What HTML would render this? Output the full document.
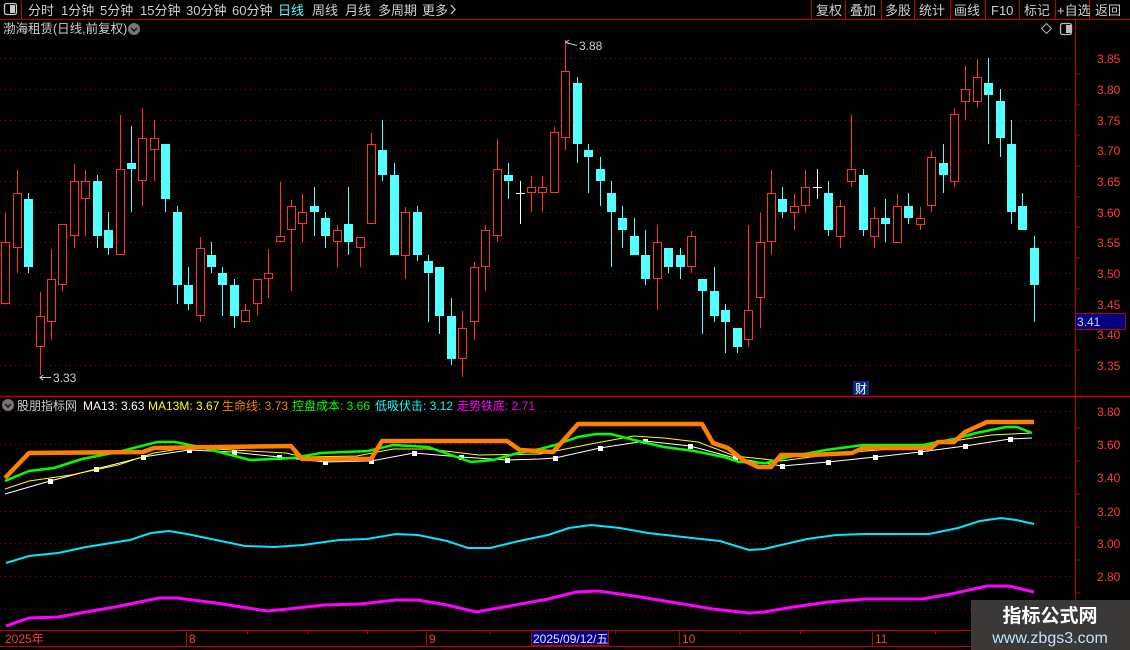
<!DOCTYPE html>
<html><head><meta charset="utf-8">
<style>
html,body{margin:0;padding:0;background:#000;width:1130px;height:650px;overflow:hidden;font-family:"Liberation Sans","Noto Sans CJK SC",sans-serif}
svg{position:absolute;left:0;top:0}
</style></head><body>
<svg width="1130" height="650" viewBox="0 0 1130 650" xmlns="http://www.w3.org/2000/svg" font-family="Liberation Sans, Noto Sans CJK SC, sans-serif">
<rect width="1130" height="650" fill="#000"/>
<!-- top bar -->
<line x1="0" y1="19.5" x2="1130" y2="19.5" stroke="#c00000" stroke-width="1"/>
<line x1="21.5" y1="0" x2="21.5" y2="19" stroke="#c00000"/>
<rect x="4.5" y="3.5" width="12" height="11" rx="2" fill="none" stroke="#c8c8c8" stroke-width="1.3"/>
<rect x="10" y="5" width="5" height="8" fill="#c8c8c8"/>
<g font-size="13" fill="#cfcfcf">
<text x="28" y="15">分时</text><text x="61" y="15">1分钟</text><text x="100" y="15">5分钟</text>
<text x="140" y="15">15分钟</text><text x="186" y="15">30分钟</text><text x="232" y="15">60分钟</text>
<text x="278" y="15" fill="#54ffff">日线</text><text x="312" y="15">周线</text><text x="345" y="15">月线</text>
<text x="378" y="15">多周期</text><text x="422" y="15">更多</text>
</g>
<polyline points="451,5 455,9.5 451,14" fill="none" stroke="#cfcfcf" stroke-width="1.2"/>
<g stroke="#c00000"><line x1="811.5" y1="0" x2="811.5" y2="19"/><line x1="845.5" y1="0" x2="845.5" y2="19"/><line x1="881.5" y1="0" x2="881.5" y2="19"/><line x1="914.5" y1="0" x2="914.5" y2="19"/><line x1="950.5" y1="0" x2="950.5" y2="19"/><line x1="985.5" y1="0" x2="985.5" y2="19"/><line x1="1019.5" y1="0" x2="1019.5" y2="19"/><line x1="1055.5" y1="0" x2="1055.5" y2="19"/><line x1="1089.5" y1="0" x2="1089.5" y2="19"/></g>
<g font-size="13" fill="#cfcfcf">
<text x="816" y="15">复权</text><text x="850" y="15">叠加</text><text x="885" y="15">多股</text><text x="919" y="15">统计</text>
<text x="954" y="15">画线</text><text x="991" y="15">F10</text><text x="1024" y="15">标记</text><text x="1057" y="15">+自选</text><text x="1095" y="15">返回</text>
</g>
<!-- title -->
<text x="3" y="33" font-size="12.5" fill="#cfcfcf">渤海租赁(日线,前复权)</text>
<circle cx="134" cy="29" r="6" fill="#777"/><polyline points="131,28 134,31 137,28" fill="none" stroke="#111" stroke-width="1.5"/>
<rect x="1043" y="25" width="7" height="7" transform="rotate(45 1046.5 28.5)" fill="none" stroke="#bbb"/>
<rect x="1060.5" y="23.5" width="11" height="11" rx="2" fill="none" stroke="#bbb" stroke-width="1.3"/><rect x="1066" y="25" width="5" height="8" fill="#bbb"/>
<!-- axes -->
<line x1="1075.5" y1="19" x2="1075.5" y2="646" stroke="#c00000"/>
<line x1="0" y1="396.5" x2="1130" y2="396.5" stroke="#c00000" stroke-width="1.5"/>
<line x1="0" y1="630.5" x2="1130" y2="630.5" stroke="#c00000"/>
<line x1="0" y1="646.5" x2="1130" y2="646.5" stroke="#c00000"/>
<!-- main grid -->
<g stroke="#a00000" stroke-dasharray="1,4" stroke-width="1">
<line x1="0" y1="58.5" x2="1075" y2="58.5"/><line x1="0" y1="89.5" x2="1075" y2="89.5"/><line x1="0" y1="120.5" x2="1075" y2="120.5"/><line x1="0" y1="150.5" x2="1075" y2="150.5"/><line x1="0" y1="181.5" x2="1075" y2="181.5"/><line x1="0" y1="212.5" x2="1075" y2="212.5"/><line x1="0" y1="242.5" x2="1075" y2="242.5"/><line x1="0" y1="273.5" x2="1075" y2="273.5"/><line x1="0" y1="304.5" x2="1075" y2="304.5"/><line x1="0" y1="334.5" x2="1075" y2="334.5"/><line x1="0" y1="365.5" x2="1075" y2="365.5"/>
<line x1="0" y1="411.5" x2="1075" y2="411.5"/><line x1="0" y1="444.5" x2="1075" y2="444.5"/><line x1="0" y1="477.5" x2="1075" y2="477.5"/><line x1="0" y1="511.5" x2="1075" y2="511.5"/><line x1="0" y1="543.5" x2="1075" y2="543.5"/><line x1="0" y1="576.5" x2="1075" y2="576.5"/><line x1="0" y1="609.5" x2="1075" y2="609.5"/>
</g>
<g font-size="12" fill="#ff3c3c">
<text x="1097" y="63">3.85</text><text x="1097" y="94">3.80</text><text x="1097" y="125">3.75</text><text x="1097" y="155">3.70</text><text x="1097" y="186">3.65</text><text x="1097" y="217">3.60</text><text x="1097" y="247">3.55</text><text x="1097" y="278">3.50</text><text x="1097" y="309">3.45</text><text x="1097" y="339">3.40</text><text x="1097" y="370">3.35</text>
<text x="1097" y="416">3.80</text><text x="1097" y="449">3.60</text><text x="1097" y="482">3.40</text><text x="1097" y="516">3.20</text><text x="1097" y="548">3.00</text><text x="1097" y="581">2.80</text>
</g>
<g stroke="#c00000"><line x1="1075" y1="74" x2="1080" y2="74"/><line x1="1075" y1="105" x2="1080" y2="105"/><line x1="1075" y1="135" x2="1080" y2="135"/><line x1="1075" y1="166" x2="1080" y2="166"/><line x1="1075" y1="197" x2="1080" y2="197"/><line x1="1075" y1="227" x2="1080" y2="227"/><line x1="1075" y1="258" x2="1080" y2="258"/><line x1="1075" y1="289" x2="1080" y2="289"/><line x1="1075" y1="319" x2="1080" y2="319"/><line x1="1075" y1="350" x2="1080" y2="350"/><line x1="1075" y1="428" x2="1080" y2="428"/><line x1="1075" y1="461" x2="1080" y2="461"/><line x1="1075" y1="494" x2="1080" y2="494"/><line x1="1075" y1="527" x2="1080" y2="527"/><line x1="1075" y1="560" x2="1080" y2="560"/><line x1="1075" y1="593" x2="1080" y2="593"/></g>
<rect x="1075.5" y="313.5" width="50" height="16" fill="#000080" stroke="#c00000"/>
<text x="1077" y="326" font-size="12" fill="#d0d0ff">3.41</text>
<!-- candles -->
<g id="c" stroke-width="1">
<g stroke="#ff3232" fill="#000">
<line x1="5.5" y1="213" x2="5.5" y2="304"/><rect x="1.5" y="242.5" width="8" height="61"/>
<line x1="17.5" y1="170" x2="17.5" y2="273"/><rect x="13.5" y="193.5" width="8" height="54"/>
<line x1="40.5" y1="292" x2="40.5" y2="375"/><rect x="36.5" y="316.5" width="8" height="30"/>
<line x1="51.5" y1="249" x2="51.5" y2="340"/><rect x="47.5" y="279.5" width="8" height="42"/>
<line x1="62.5" y1="224" x2="62.5" y2="291"/><rect x="58.5" y="224.5" width="8" height="60"/>
<line x1="74.5" y1="164" x2="74.5" y2="248"/><rect x="70.5" y="181.5" width="8" height="54"/>
<line x1="85.5" y1="170" x2="85.5" y2="236"/><rect x="81.5" y="181.5" width="8" height="17"/>
<line x1="120.5" y1="115" x2="120.5" y2="255"/><rect x="116.5" y="169.5" width="8" height="85"/>
<line x1="142.5" y1="108" x2="142.5" y2="206"/><rect x="138.5" y="138.5" width="8" height="42"/>
<line x1="154.5" y1="120" x2="154.5" y2="181"/><rect x="150.5" y="138.5" width="8" height="11"/>
<line x1="200.5" y1="237" x2="200.5" y2="322"/><rect x="196.5" y="248.5" width="8" height="67"/>
<line x1="245.5" y1="304" x2="245.5" y2="322"/><rect x="241.5" y="310.5" width="8" height="11"/>
<line x1="257.5" y1="279" x2="257.5" y2="316"/><rect x="253.5" y="279.5" width="8" height="24"/>
<line x1="268.5" y1="249" x2="268.5" y2="298"/><rect x="264.5" y="273.5" width="8" height="5"/>
<line x1="280.5" y1="182" x2="280.5" y2="242"/><rect x="276.5" y="236.5" width="8" height="5"/>
<line x1="291.5" y1="200" x2="291.5" y2="291"/><rect x="287.5" y="206.5" width="8" height="23"/>
<line x1="302.5" y1="194" x2="302.5" y2="242"/><rect x="298.5" y="212.5" width="8" height="11"/>
<line x1="337.5" y1="225" x2="337.5" y2="267"/><rect x="333.5" y="230.5" width="8" height="11"/>
<line x1="360.5" y1="237" x2="360.5" y2="267"/><rect x="356.5" y="237.5" width="8" height="10"/>
<line x1="371.5" y1="133" x2="371.5" y2="224"/><rect x="367.5" y="144.5" width="8" height="79"/>
<line x1="405.5" y1="207" x2="405.5" y2="279"/><rect x="401.5" y="212.5" width="8" height="43"/>
<line x1="462.5" y1="311" x2="462.5" y2="377"/><rect x="458.5" y="328.5" width="8" height="30"/>
<line x1="474.5" y1="262" x2="474.5" y2="340"/><rect x="470.5" y="267.5" width="8" height="54"/>
<line x1="485.5" y1="225" x2="485.5" y2="291"/><rect x="481.5" y="230.5" width="8" height="36"/>
<line x1="497.5" y1="139" x2="497.5" y2="242"/><rect x="493.5" y="169.5" width="8" height="66"/>
<line x1="531.5" y1="176" x2="531.5" y2="212"/><rect x="527.5" y="187.5" width="8" height="5"/>
<line x1="542.5" y1="176" x2="542.5" y2="212"/><rect x="538.5" y="187.5" width="8" height="5"/>
<line x1="554.5" y1="127" x2="554.5" y2="193"/><rect x="550.5" y="132.5" width="8" height="60"/>
<line x1="565.5" y1="40" x2="565.5" y2="150"/><rect x="561.5" y="71.5" width="8" height="66"/>
<line x1="657.5" y1="225" x2="657.5" y2="310"/><rect x="653.5" y="242.5" width="8" height="36"/>
<line x1="691.5" y1="231" x2="691.5" y2="273"/><rect x="687.5" y="236.5" width="8" height="30"/>
<line x1="748.5" y1="225" x2="748.5" y2="347"/><rect x="744.5" y="310.5" width="8" height="29"/>
<line x1="760.5" y1="213" x2="760.5" y2="328"/><rect x="756.5" y="242.5" width="8" height="55"/>
<line x1="771.5" y1="170" x2="771.5" y2="255"/><rect x="767.5" y="193.5" width="8" height="48"/>
<line x1="794.5" y1="194" x2="794.5" y2="230"/><rect x="790.5" y="206.5" width="8" height="6"/>
<line x1="805.5" y1="170" x2="805.5" y2="213"/><rect x="801.5" y="187.5" width="8" height="18"/>
<line x1="840.5" y1="200" x2="840.5" y2="248"/><rect x="836.5" y="206.5" width="8" height="30"/>
<line x1="851.5" y1="115" x2="851.5" y2="187"/><rect x="847.5" y="169.5" width="8" height="12"/>
<line x1="874.5" y1="207" x2="874.5" y2="248"/><rect x="870.5" y="218.5" width="8" height="18"/>
<line x1="897.5" y1="194" x2="897.5" y2="243"/><rect x="893.5" y="206.5" width="8" height="36"/>
<line x1="920.5" y1="207" x2="920.5" y2="230"/><rect x="916.5" y="218.5" width="8" height="6"/>
<line x1="931.5" y1="151" x2="931.5" y2="212"/><rect x="927.5" y="157.5" width="8" height="48"/>
<line x1="954.5" y1="108" x2="954.5" y2="187"/><rect x="950.5" y="114.5" width="8" height="67"/>
<line x1="965.5" y1="66" x2="965.5" y2="120"/><rect x="961.5" y="89.5" width="8" height="12"/>
<line x1="977.5" y1="59" x2="977.5" y2="107"/><rect x="973.5" y="77.5" width="8" height="24"/>
</g>
<g stroke="#54ffff" fill="#54ffff">
<line x1="28.5" y1="193" x2="28.5" y2="273"/><rect x="24" y="199" width="9" height="68" stroke="none"/>
<line x1="97.5" y1="175" x2="97.5" y2="248"/><rect x="93" y="181" width="9" height="55" stroke="none"/>
<line x1="108.5" y1="212" x2="108.5" y2="255"/><rect x="104" y="230" width="9" height="18" stroke="none"/>
<line x1="131.5" y1="126" x2="131.5" y2="212"/><rect x="127" y="163" width="9" height="6" stroke="none"/>
<line x1="165.5" y1="144" x2="165.5" y2="212"/><rect x="161" y="144" width="9" height="55" stroke="none"/>
<line x1="177.5" y1="206" x2="177.5" y2="304"/><rect x="173" y="212" width="9" height="73" stroke="none"/>
<line x1="188.5" y1="267" x2="188.5" y2="310"/><rect x="184" y="285" width="9" height="19" stroke="none"/>
<line x1="211.5" y1="242" x2="211.5" y2="273"/><rect x="207" y="255" width="9" height="12" stroke="none"/>
<line x1="222.5" y1="267" x2="222.5" y2="316"/><rect x="218" y="273" width="9" height="12" stroke="none"/>
<line x1="234.5" y1="279" x2="234.5" y2="328"/><rect x="230" y="285" width="9" height="31" stroke="none"/>
<line x1="314.5" y1="187" x2="314.5" y2="236"/><rect x="310" y="206" width="9" height="6" stroke="none"/>
<line x1="325.5" y1="212" x2="325.5" y2="248"/><rect x="321" y="218" width="9" height="18" stroke="none"/>
<line x1="348.5" y1="187" x2="348.5" y2="255"/><rect x="344" y="224" width="9" height="18" stroke="none"/>
<line x1="382.5" y1="120" x2="382.5" y2="181"/><rect x="378" y="150" width="9" height="25" stroke="none"/>
<line x1="394.5" y1="163" x2="394.5" y2="255"/><rect x="390" y="175" width="9" height="80" stroke="none"/>
<line x1="417.5" y1="206" x2="417.5" y2="261"/><rect x="413" y="212" width="9" height="43" stroke="none"/>
<line x1="428.5" y1="255" x2="428.5" y2="322"/><rect x="424" y="261" width="9" height="12" stroke="none"/>
<line x1="439.5" y1="267" x2="439.5" y2="334"/><rect x="435" y="267" width="9" height="49" stroke="none"/>
<line x1="451.5" y1="298" x2="451.5" y2="365"/><rect x="447" y="316" width="9" height="43" stroke="none"/>
<line x1="508.5" y1="163" x2="508.5" y2="199"/><rect x="504" y="175" width="9" height="6" stroke="none"/>
<line x1="577.5" y1="77" x2="577.5" y2="163"/><rect x="573" y="83" width="9" height="61" stroke="none"/>
<line x1="588.5" y1="144" x2="588.5" y2="193"/><rect x="584" y="150" width="9" height="7" stroke="none"/>
<line x1="600.5" y1="157" x2="600.5" y2="206"/><rect x="596" y="169" width="9" height="12" stroke="none"/>
<line x1="611.5" y1="181" x2="611.5" y2="267"/><rect x="607" y="193" width="9" height="19" stroke="none"/>
<line x1="622.5" y1="206" x2="622.5" y2="248"/><rect x="618" y="218" width="9" height="12" stroke="none"/>
<line x1="634.5" y1="218" x2="634.5" y2="255"/><rect x="630" y="236" width="9" height="19" stroke="none"/>
<line x1="645.5" y1="230" x2="645.5" y2="285"/><rect x="641" y="255" width="9" height="24" stroke="none"/>
<line x1="668.5" y1="248" x2="668.5" y2="273"/><rect x="664" y="248" width="9" height="19" stroke="none"/>
<line x1="680.5" y1="248" x2="680.5" y2="279"/><rect x="676" y="255" width="9" height="12" stroke="none"/>
<line x1="702.5" y1="279" x2="702.5" y2="334"/><rect x="698" y="279" width="9" height="12" stroke="none"/>
<line x1="714.5" y1="267" x2="714.5" y2="322"/><rect x="710" y="291" width="9" height="25" stroke="none"/>
<line x1="725.5" y1="304" x2="725.5" y2="353"/><rect x="721" y="310" width="9" height="12" stroke="none"/>
<line x1="737.5" y1="328" x2="737.5" y2="353"/><rect x="733" y="328" width="9" height="19" stroke="none"/>
<line x1="782.5" y1="187" x2="782.5" y2="218"/><rect x="778" y="199" width="9" height="13" stroke="none"/>
<line x1="828.5" y1="181" x2="828.5" y2="236"/><rect x="824" y="193" width="9" height="37" stroke="none"/>
<line x1="863.5" y1="169" x2="863.5" y2="236"/><rect x="859" y="175" width="9" height="55" stroke="none"/>
<line x1="885.5" y1="199" x2="885.5" y2="242"/><rect x="881" y="218" width="9" height="6" stroke="none"/>
<line x1="908.5" y1="193" x2="908.5" y2="224"/><rect x="904" y="206" width="9" height="12" stroke="none"/>
<line x1="943.5" y1="144" x2="943.5" y2="193"/><rect x="939" y="163" width="9" height="12" stroke="none"/>
<line x1="988.5" y1="58" x2="988.5" y2="144"/><rect x="984" y="83" width="9" height="12" stroke="none"/>
<line x1="1000.5" y1="89" x2="1000.5" y2="157"/><rect x="996" y="101" width="9" height="37" stroke="none"/>
<line x1="1011.5" y1="120" x2="1011.5" y2="224"/><rect x="1007" y="144" width="9" height="68" stroke="none"/>
<line x1="1022.5" y1="193" x2="1022.5" y2="230"/><rect x="1018" y="206" width="9" height="24" stroke="none"/>
<line x1="1034.5" y1="236" x2="1034.5" y2="322"/><rect x="1030" y="248" width="9" height="37" stroke="none"/>
</g>
<g stroke="#fff">
<line x1="520.5" y1="181" x2="520.5" y2="224"/><line x1="516" y1="193.5" x2="525" y2="193.5"/>
<line x1="817.5" y1="169" x2="817.5" y2="199"/><line x1="813" y1="187.5" x2="822" y2="187.5"/>
</g>
</g>
<!-- high/low labels -->
<line x1="40" y1="377.5" x2="51" y2="377.5" stroke="#ccc"/><polyline points="43,375 40,377.5 43,380" fill="none" stroke="#ccc"/>
<text x="53" y="382" font-size="12" fill="#cfcfcf">3.33</text>
<line x1="566" y1="42.5" x2="577" y2="45.5" stroke="#ccc"/><polyline points="569,40 566,42 569,44" fill="none" stroke="#ccc"/>
<text x="579" y="50" font-size="12" fill="#cfcfcf">3.88</text>
<rect x="853" y="381" width="16" height="14" fill="#0a2a8a"/><text x="855" y="393" font-size="12" fill="#fff">财</text>
<!-- indicator header -->
<circle cx="8" cy="405" r="6" fill="#777"/><polyline points="5,404 8,407 11,404" fill="none" stroke="#111" stroke-width="1.5"/>
<g font-size="12">
<text x="17" y="410" fill="#cfcfcf">股朋指标网</text>
<text x="83" y="410" fill="#fff">MA13: 3.63</text>
<text x="148" y="410" fill="#ffff00">MA13M: 3.67</text>
<text x="222" y="410" fill="#ff8000">生命线: 3.73</text>
<text x="292" y="410" fill="#00ff00">控盘成本: 3.66</text>
<text x="375" y="410" fill="#00ffff">低吸伏击: 3.12</text>
<text x="457" y="410" fill="#ff00ff">走势铁底: 2.71</text>
</g>
<!-- indicator lines -->
<polyline fill="none" stroke="#ff00ff" stroke-width="3" points="6,626 29,618 58,617 86,612 115,607 159,598 177,598 216,603 267,611 288,609 324,605 360,604 396,600 418,600 447,605 476,612 504,607 548,599 576,592 598,591 634,596 677,603 713,609 749,613 764,612 793,607 828,602 865,599 922,599 951,594 987,586 1009,586 1034,592"/>
<polyline fill="none" stroke="#00e8ff" stroke-width="2" points="6,563 29,556 58,553 86,547 130,540 151,533 169,531 187,534 245,546 274,547 303,545 339,540 367,539 396,534 418,535 447,541 468,548 490,548 519,541 548,535 569,528 591,525 620,528 648,533 692,538 720,541 749,550 764,549 807,539 836,535 865,534 929,534 958,528 980,521 1001,518 1016,520 1034,524"/>
<polyline fill="none" stroke="#fff" stroke-width="1" points="5,494 50,481 96,469 143,457 189,450 232,452 279,457 325,462 371,461 414,453 461,457 507,460 540,459 555,458 600,448 645,441 690,446 735,458 782,466 828,462 875,457 920,452 965,446 1010,439 1032,438"/>
<g fill="#fff"><rect x="48" y="479" width="5" height="5"/><rect x="94" y="467" width="5" height="5"/><rect x="141" y="455" width="5" height="5"/><rect x="187" y="448" width="5" height="5"/><rect x="232" y="450" width="5" height="5"/><rect x="277" y="455" width="5" height="5"/><rect x="323" y="460" width="5" height="5"/><rect x="369" y="459" width="5" height="5"/><rect x="412" y="451" width="5" height="5"/><rect x="459" y="455" width="5" height="5"/><rect x="505" y="458" width="5" height="5"/><rect x="553" y="456" width="5" height="5"/><rect x="598" y="446" width="5" height="5"/><rect x="643" y="439" width="5" height="5"/><rect x="688" y="444" width="5" height="5"/><rect x="733" y="456" width="5" height="5"/><rect x="780" y="464" width="5" height="5"/><rect x="826" y="460" width="5" height="5"/><rect x="873" y="455" width="5" height="5"/><rect x="918" y="450" width="5" height="5"/><rect x="963" y="444" width="5" height="5"/><rect x="1008" y="437" width="5" height="5"/></g>
<polyline fill="none" stroke="#ffff00" stroke-width="1" points="5,489 29,481 71,475 118,465 154,453 179,449 214,449 286,453 304,457 357,456 393,449 428,449 479,455 540,454 596,443 634,436 664,438 698,442 735,456 781,461 841,453 916,447 954,441 991,435 1032,433"/>
<polyline fill="none" stroke="#00ff00" stroke-width="2.5" points="5,481 29,471 54,468 82,459 118,452 157,442 175,442 200,447 250,460 293,458 321,453 368,451 393,445 428,447 471,462 493,460 518,453 540,449 555,445 578,437 596,434 611,434 638,441 664,447 694,451 724,457 739,462 766,463 788,457 826,450 863,445 923,445 954,439 976,433 1006,427 1017,427 1032,433"/>
<polyline fill="none" stroke="#ff8000" stroke-width="4.5" stroke-linejoin="round" points="5,478 29,453 143,452 154,448 291,446 302,459 371,459 382,441 507,441 520,450 553,452 578,424 702,424 713,443 728,448 743,460 758,467 771,467 781,455 811,455 852,453 863,448 931,448 938,442 954,442 965,432 987,422 1034,422"/>
<!-- date axis -->
<g stroke="#c00000"><line x1="186.5" y1="630" x2="186.5" y2="646"/><line x1="426.5" y1="630" x2="426.5" y2="646"/><line x1="679.5" y1="630" x2="679.5" y2="646"/><line x1="872.5" y1="630" x2="872.5" y2="646"/>
<line x1="247.5" y1="630" x2="247.5" y2="634"/><line x1="307.5" y1="630" x2="307.5" y2="634"/><line x1="367.5" y1="630" x2="367.5" y2="634"/><line x1="490.5" y1="630" x2="490.5" y2="634"/><line x1="615.5" y1="630" x2="615.5" y2="634"/><line x1="740.5" y1="630" x2="740.5" y2="634"/><line x1="800.5" y1="630" x2="800.5" y2="634"/><line x1="935.5" y1="630" x2="935.5" y2="634"/></g>
<g font-size="12" fill="#ff3c3c"><text x="5" y="643">2025年</text><text x="189" y="643">8</text><text x="429" y="643">9</text><text x="682" y="643">10</text><text x="875" y="643">11</text></g>
<rect x="531.5" y="630.5" width="77" height="15" fill="#000080" stroke="#c00000"/>
<text x="533" y="643" font-size="12" fill="#e0e0ff">2025/09/12/五</text>
<!-- watermark -->
<rect x="971" y="600" width="159" height="50" fill="#3b3838"/>
<text x="1050" y="622" font-size="19" font-weight="bold" fill="#fff" text-anchor="middle">指标公式网</text>
<text x="1050" y="643" font-size="16" fill="#bfe2ff" text-anchor="middle">www.zbgs3.com</text>
</svg>
</body></html>
